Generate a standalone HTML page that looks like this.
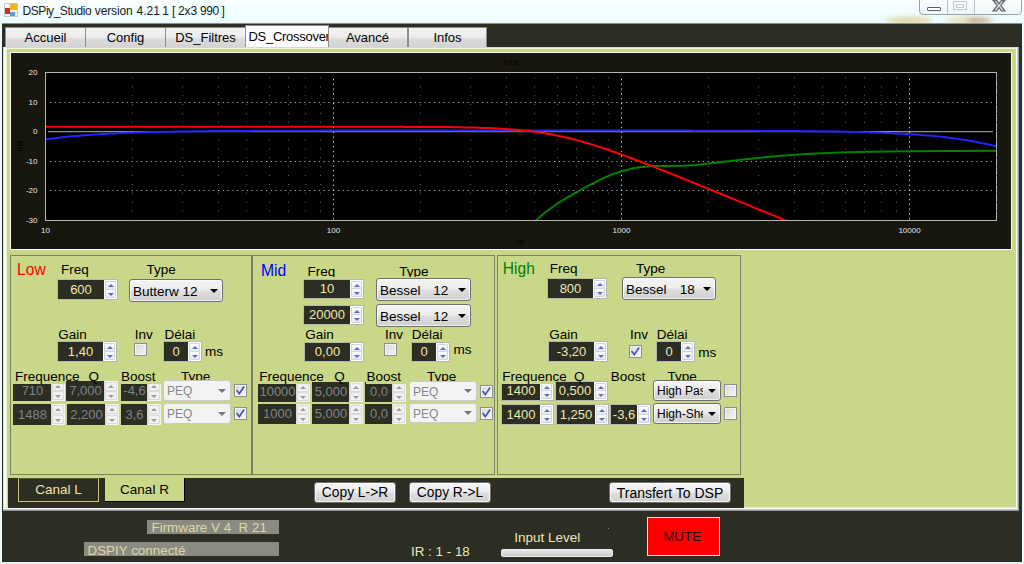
<!DOCTYPE html>
<html lang="fr"><head><meta charset="utf-8"><title>DSPiy_Studio</title>
<style>
html,body{margin:0;padding:0;}
body{width:1024px;height:564px;overflow:hidden;position:relative;background:#ecfbfd;
 font-family:"Liberation Sans",Arial,sans-serif;font-size:13px;color:#000;}
div,svg.chart,i,b{position:absolute;box-sizing:border-box;}
.t{white-space:nowrap;}
.tab{top:27px;height:21px;border:1px solid #8c8e92;border-bottom:none;text-align:center;font-size:13px;line-height:20px;
 background:linear-gradient(#f3f3f3 0%,#ececec 45%,#dcdcdc 55%,#d2d2d2 100%);color:#000;white-space:nowrap;overflow:hidden;}
.tab.sel{top:25px;height:23px;background:#fff;line-height:21px;border-color:#8c8e92;}
.pn{border:1px solid #7c8165;background:#c9d789;}
.nud{border:1px solid #b4b6b0;background:#fff;}
.nud .nv{left:0;top:0;background:#2d2e23;color:#f1e7b0;text-align:center;font-size:13px;white-space:nowrap;overflow:hidden;}
.nud .sp{right:0;top:0;background:#fff;}
.nud .sp i{left:1px;right:1px;height:9px;border:1px solid #d2d4dc;border-radius:1px;background:linear-gradient(#fdfdfd,#e6e8ee);}
.nud .sp i.u{top:1px;}
.nud .sp i.d{bottom:1px;}
.nud .sp i:after{content:"";position:absolute;left:50%;top:50%;margin-left:-3px;width:0;height:0;border-left:3px solid transparent;border-right:3px solid transparent;}
.nud .sp i.u:after{margin-top:-2px;border-bottom:3px solid #5d6cc6;}
.nud .sp i.d:after{margin-top:-1px;border-top:3px solid #5d6cc6;}
.nud.dis{border:none;background:none;}
.nud.dis .nv{color:#7e848c;}
.nud.dis .sp{background:#ececec;border:1px solid #f4f4f4;border-left-color:#dcdcdc;}
.nud.dis .sp i{border-color:#dadada;background:#f1f1f1;left:0;right:0;}
.nud.dis .sp i.u{top:0;}
.nud.dis .sp i.d{bottom:0;}
.nud.dis .sp i.u:after{border-bottom-color:#9a9a9a;}
.nud.dis .sp i.d:after{border-top-color:#9a9a9a;}
.cb{border:1px solid #707070;border-radius:3px;background:linear-gradient(#f4f4f4 0%,#ececec 48%,#dedede 52%,#d0d0d0 100%);
 font-size:13.5px;white-space:nowrap;overflow:hidden;color:#000;box-shadow:inset 0 0 0 1px rgba(255,255,255,.7);}
.cb span{position:absolute;top:0;overflow:hidden;white-space:nowrap;}
.cb b{right:4px;top:50%;margin-top:-2px;width:0;height:0;border-left:4px solid transparent;border-right:4px solid transparent;border-top:4px solid #000;}
.cb.dis{border-color:#c9cbc6;background:#f3f3f3;color:#83878c;box-shadow:none;}
.cb.dis b{border-top-color:#777;}
.ck{border:1px solid #8e8f8f;background:linear-gradient(135deg,#d8d8d8,#f6f6f6);box-shadow:inset 0 0 0 1px #f4f4f4;}
.btn{border:1px solid #707070;border-radius:3px;background:linear-gradient(#f4f4f4 0%,#ececec 48%,#dedede 52%,#d0d0d0 100%);
 text-align:center;font-size:13.5px;white-space:nowrap;color:#000;box-shadow:inset 0 0 0 1px rgba(255,255,255,.7);}
svg text{font-family:"Liberation Sans",Arial,sans-serif;}
</style></head><body>

<div style="left:0px;top:0px;width:1024px;height:24px;background:linear-gradient(#fbffff 0%,#f1fdfe 45%,#ebfcfd 100%);"></div>
<svg style="position:absolute;left:4px;top:3px" width="14" height="14" viewBox="0 0 14 14"><rect x="0.5" y="0.5" width="13" height="13" fill="#f4f4f4" stroke="#c9c9c9"/><rect x="1" y="5" width="5" height="6" fill="#c8302a"/><rect x="6" y="1" width="7" height="6" fill="#f0b429"/><rect x="6" y="9" width="5" height="4" fill="#5b9be0"/><rect x="1" y="1" width="3" height="3" fill="#fff"/></svg>
<div class="t" style="left:0;top:0;width:300px;height:22px;">
<div class="t" style="left:22.6px;top:3.94px;font-size:12px;line-height:14px;color:#1a1a1a;letter-spacing:-0.46px;">DSPiy_Studio</div>
<div class="t" style="left:94.8px;top:3.94px;font-size:12px;line-height:14px;color:#1a1a1a;letter-spacing:-0.14px;">version</div>
<div class="t" style="left:136.6px;top:3.94px;font-size:12px;line-height:14px;color:#1a1a1a;letter-spacing:-0.03px;">4.21</div>
<div class="t" style="left:162.2px;top:3.94px;font-size:12px;line-height:14px;color:#1a1a1a;letter-spacing:0px;">1</div>
<div class="t" style="left:172px;top:3.94px;font-size:12px;line-height:14px;color:#1a1a1a;letter-spacing:0px;">[</div>
<div class="t" style="left:178px;top:3.94px;font-size:12px;line-height:14px;color:#1a1a1a;letter-spacing:-0.1px;">2x3</div>
<div class="t" style="left:200px;top:3.94px;font-size:12px;line-height:14px;color:#1a1a1a;letter-spacing:-0.4px;">990</div>
<div class="t" style="left:221.6px;top:3.94px;font-size:12px;line-height:14px;color:#1a1a1a;letter-spacing:0px;">]</div>
</div>
<div style="left:886px;top:17px;width:46px;height:7px;background:#dcd28f;filter:blur(2.5px);opacity:.85;border-radius:50%;"></div>
<div style="left:946px;top:17px;width:46px;height:7px;background:linear-gradient(90deg,#e6e2b0 0%,#e0d8a6 40%,#bfa482 60%,#c0a684 100%);filter:blur(2.5px);opacity:.9;border-radius:50%;"></div>
<div style="left:919px;top:-4px;width:103px;height:19px;border:1px solid #9aa3a8;border-radius:4px;background:linear-gradient(#fdfefe,#eef6f8);"></div>
<div style="left:947px;top:0px;width:1px;height:14px;background:#b9c0c4;"></div>
<div style="left:974px;top:0px;width:1px;height:14px;background:#b9c0c4;"></div>
<div style="left:927px;top:7px;width:14px;height:4px;border:1px solid #5a5f66;border-radius:1px;background:#fff;"></div>
<div style="left:953px;top:1px;width:14px;height:9px;border:1px solid #c4c8cc;background:#f6f8f9;"></div>
<div style="left:956px;top:4px;width:8px;height:4px;border:1px solid #c4c8cc;"></div>
<svg style="position:absolute;left:992px;top:0px" width="14" height="12" viewBox="0 0 14 12"><path d="M1.2 0.5 L4.6 0.5 L7 3.6 L9.4 0.5 L12.8 0.5 L8.8 5.6 L12.8 10.8 L9.4 10.8 L7 7.6 L4.6 10.8 L1.2 10.8 L5.2 5.6 Z" fill="#dadade" stroke="#666a74" stroke-width="1.3"/></svg>
<div style="left:2px;top:24px;width:1020px;height:538px;background:#2d2e23;"></div>
<div style="left:2px;top:23px;width:1020px;height:1px;background:#8e9088;"></div>
<div style="left:0px;top:562px;width:1024px;height:2px;background:#e4f1f6;"></div>
<div class="tab" style="left:5px;width:81px;">Accueil</div>
<div class="tab" style="left:85px;width:81px;">Config</div>
<div class="tab" style="left:165px;width:81px;">DS_Filtres</div>
<div class="tab" style="left:327px;width:81px;">Avancé</div>
<div class="tab" style="left:408px;width:79px;">Infos</div>
<div class="tab sel" style="left:245px;width:84px;text-align:left;padding-left:2.5px;letter-spacing:-0.28px;">DS_Crossover</div>
<div style="left:3px;top:47px;width:1016px;height:464px;background:#c9d789;"></div>
<div style="left:3px;top:47px;width:1016px;height:1px;background:#d6d6d8;"></div>
<div style="left:4px;top:48px;width:1014px;height:1px;background:#f1f5de;"></div>
<div style="left:3px;top:47px;width:1px;height:464px;background:#d4d4d4;"></div>
<div style="left:4px;top:47px;width:2px;height:464px;background:#fff;"></div>
<div style="left:6px;top:49px;width:1px;height:459px;background:#e6edc6;"></div>
<div style="left:1016px;top:49px;width:1px;height:460px;background:#fff;"></div>
<div style="left:1017px;top:48px;width:1px;height:462px;background:#c8c8cc;"></div>
<div style="left:1018px;top:47px;width:1px;height:464px;background:#98989f;"></div>
<div style="left:3px;top:507px;width:1014px;height:1px;background:#e6edc6;"></div>
<div style="left:3px;top:508px;width:1015px;height:1px;background:#fff;"></div>
<div style="left:3px;top:509px;width:1015px;height:1px;background:#c6c6ca;"></div>
<div style="left:3px;top:510px;width:1016px;height:1px;background:#93939b;"></div>
<div style="left:10px;top:52px;width:1002px;height:198px;background:#fff;"></div>
<svg class="chart" style="left:11px;top:53px" width="1000" height="196" viewBox="11 53 1000 196"><rect x="11" y="53" width="1000" height="196" fill="#17170f"/><rect x="45.5" y="72.5" width="951.0" height="148.0" fill="#000" stroke="#b4b4b4" stroke-width="1"/><line x1="50" x2="995.5" y1="102.5" y2="102.5" stroke="#b2b2b2" stroke-width="1" stroke-dasharray="1.2 3.6"/><line x1="50" x2="995.5" y1="161.5" y2="161.5" stroke="#b2b2b2" stroke-width="1" stroke-dasharray="1.2 3.6"/><line x1="50" x2="995.5" y1="190.5" y2="190.5" stroke="#b2b2b2" stroke-width="1" stroke-dasharray="1.2 3.6"/><line x1="132.5" x2="132.5" y1="77.5" y2="219.5" stroke="#6c6c6c" stroke-width="1" stroke-dasharray="1 7.87"/><line x1="182.5" x2="182.5" y1="77.5" y2="219.5" stroke="#6c6c6c" stroke-width="1" stroke-dasharray="1 7.87"/><line x1="218.5" x2="218.5" y1="77.5" y2="219.5" stroke="#6c6c6c" stroke-width="1" stroke-dasharray="1 7.87"/><line x1="246.5" x2="246.5" y1="77.5" y2="219.5" stroke="#6c6c6c" stroke-width="1" stroke-dasharray="1 7.87"/><line x1="269.5" x2="269.5" y1="77.5" y2="219.5" stroke="#6c6c6c" stroke-width="1" stroke-dasharray="1 7.87"/><line x1="288.5" x2="288.5" y1="77.5" y2="219.5" stroke="#6c6c6c" stroke-width="1" stroke-dasharray="1 7.87"/><line x1="305.5" x2="305.5" y1="77.5" y2="219.5" stroke="#6c6c6c" stroke-width="1" stroke-dasharray="1 7.87"/><line x1="320.5" x2="320.5" y1="77.5" y2="219.5" stroke="#6c6c6c" stroke-width="1" stroke-dasharray="1 7.87"/><line x1="333.5" x2="333.5" y1="79" y2="219.5" stroke="#dcdcdc" stroke-width="1" stroke-dasharray="1.2 3.6"/><line x1="420.5" x2="420.5" y1="77.5" y2="219.5" stroke="#6c6c6c" stroke-width="1" stroke-dasharray="1 7.87"/><line x1="470.5" x2="470.5" y1="77.5" y2="219.5" stroke="#6c6c6c" stroke-width="1" stroke-dasharray="1 7.87"/><line x1="506.5" x2="506.5" y1="77.5" y2="219.5" stroke="#6c6c6c" stroke-width="1" stroke-dasharray="1 7.87"/><line x1="534.5" x2="534.5" y1="77.5" y2="219.5" stroke="#6c6c6c" stroke-width="1" stroke-dasharray="1 7.87"/><line x1="557.5" x2="557.5" y1="77.5" y2="219.5" stroke="#6c6c6c" stroke-width="1" stroke-dasharray="1 7.87"/><line x1="576.5" x2="576.5" y1="77.5" y2="219.5" stroke="#6c6c6c" stroke-width="1" stroke-dasharray="1 7.87"/><line x1="593.5" x2="593.5" y1="77.5" y2="219.5" stroke="#6c6c6c" stroke-width="1" stroke-dasharray="1 7.87"/><line x1="608.5" x2="608.5" y1="77.5" y2="219.5" stroke="#6c6c6c" stroke-width="1" stroke-dasharray="1 7.87"/><line x1="621.5" x2="621.5" y1="79" y2="219.5" stroke="#dcdcdc" stroke-width="1" stroke-dasharray="1.2 3.6"/><line x1="708.5" x2="708.5" y1="77.5" y2="219.5" stroke="#6c6c6c" stroke-width="1" stroke-dasharray="1 7.87"/><line x1="758.5" x2="758.5" y1="77.5" y2="219.5" stroke="#6c6c6c" stroke-width="1" stroke-dasharray="1 7.87"/><line x1="794.5" x2="794.5" y1="77.5" y2="219.5" stroke="#6c6c6c" stroke-width="1" stroke-dasharray="1 7.87"/><line x1="822.5" x2="822.5" y1="77.5" y2="219.5" stroke="#6c6c6c" stroke-width="1" stroke-dasharray="1 7.87"/><line x1="845.5" x2="845.5" y1="77.5" y2="219.5" stroke="#6c6c6c" stroke-width="1" stroke-dasharray="1 7.87"/><line x1="864.5" x2="864.5" y1="77.5" y2="219.5" stroke="#6c6c6c" stroke-width="1" stroke-dasharray="1 7.87"/><line x1="881.5" x2="881.5" y1="77.5" y2="219.5" stroke="#6c6c6c" stroke-width="1" stroke-dasharray="1 7.87"/><line x1="896.5" x2="896.5" y1="77.5" y2="219.5" stroke="#6c6c6c" stroke-width="1" stroke-dasharray="1 7.87"/><line x1="909.5" x2="909.5" y1="79" y2="219.5" stroke="#dcdcdc" stroke-width="1" stroke-dasharray="1.2 3.6"/><line x1="996.5" x2="996.5" y1="77.5" y2="219.5" stroke="#6c6c6c" stroke-width="1" stroke-dasharray="1 7.87"/><line x1="48" x2="993" y1="131.7" y2="131.7" stroke="#b6b6b2" stroke-width="1"/><clipPath id="pc"><rect x="46.0" y="73.0" width="950.0" height="147.0"/></clipPath><polyline points="535.3,221.0 545.0,212.5 556.0,204.5 566.0,198.2 576.8,192.2 590.0,184.8 604.4,177.6 614.0,173.8 621.7,171.2 632.0,168.6 641.3,167.0 652.8,166.0 665.0,165.9 683.8,165.8 696.0,164.9 709.0,163.4 724.0,161.7 739.0,160.0 758.0,158.0 778.0,156.1 792.0,155.0 806.0,154.1 823.0,153.3 840.0,152.6 870.0,151.8 909.5,151.2 950.0,150.9 996.0,150.8" fill="none" stroke="#008200" stroke-width="2" stroke-linejoin="round" clip-path="url(#pc)"/><polyline points="45.5,139.5 47.9,139.1 50.3,138.8 52.7,138.5 55.1,138.2 57.5,137.9 59.9,137.6 62.3,137.3 64.7,137.1 67.1,136.8 69.5,136.6 71.9,136.3 74.3,136.1 76.7,135.9 79.1,135.7 81.5,135.5 83.9,135.3 86.3,135.1 88.7,134.9 91.1,134.8 93.5,134.6 95.9,134.4 98.3,134.3 100.7,134.1 103.1,134.0 105.5,133.9 107.9,133.7 110.3,133.6 112.7,133.5 115.1,133.4 117.5,133.2 119.9,133.1 122.3,133.0 124.7,132.9 127.1,132.8 129.5,132.8 131.9,132.7 134.3,132.6 136.7,132.5 139.1,132.4 141.5,132.4 143.9,132.3 146.3,132.2 148.7,132.2 151.1,132.1 153.5,132.0 155.9,132.0 158.3,131.9 160.7,131.9 163.1,131.8 165.5,131.8 167.9,131.7 170.3,131.7 172.7,131.6 175.1,131.6 177.5,131.5 179.9,131.5 182.3,131.5 184.7,131.4 187.1,131.4 189.5,131.4 191.9,131.3 194.3,131.3 196.7,131.3 199.1,131.2 201.5,131.2 203.9,131.2 206.3,131.2 208.7,131.1 211.1,131.1 213.5,131.1 215.9,131.1 218.3,131.1 220.7,131.0 223.1,131.0 225.5,131.0 227.9,131.0 230.3,131.0 232.7,131.0 235.1,130.9 237.5,130.9 239.9,130.9 242.3,130.9 244.7,130.9 247.1,130.9 249.5,130.9 251.9,130.8 254.3,130.8 256.7,130.8 259.1,130.8 261.5,130.8 263.9,130.8 266.3,130.8 268.7,130.8 271.1,130.8 273.5,130.8 275.9,130.8 278.3,130.7 280.7,130.7 283.1,130.7 285.5,130.7 287.9,130.7 290.3,130.7 292.7,130.7 295.1,130.7 297.5,130.7 299.9,130.7 302.3,130.7 304.7,130.7 307.1,130.7 309.5,130.7 311.9,130.7 314.3,130.7 316.7,130.7 319.1,130.7 321.5,130.6 323.9,130.6 326.3,130.6 328.7,130.6 331.1,130.6 333.5,130.6 335.9,130.6 338.3,130.6 340.7,130.6 343.1,130.6 345.5,130.6 347.9,130.6 350.3,130.6 352.7,130.6 355.1,130.6 357.5,130.6 359.9,130.6 362.3,130.6 364.7,130.6 367.1,130.6 369.5,130.6 371.9,130.6 374.3,130.6 376.7,130.6 379.1,130.6 381.5,130.6 383.9,130.6 386.3,130.6 388.7,130.6 391.1,130.6 393.5,130.6 395.9,130.6 398.3,130.6 400.7,130.6 403.1,130.6 405.5,130.6 407.9,130.6 410.3,130.6 412.7,130.6 415.1,130.6 417.5,130.6 419.9,130.6 422.3,130.6 424.7,130.6 427.1,130.6 429.5,130.6 431.9,130.6 434.3,130.6 436.7,130.6 439.1,130.6 441.5,130.6 443.9,130.6 446.3,130.6 448.7,130.6 451.1,130.6 453.5,130.6 455.9,130.6 458.3,130.6 460.7,130.6 463.1,130.6 465.5,130.6 467.9,130.6 470.3,130.6 472.7,130.6 475.1,130.6 477.5,130.6 479.9,130.6 482.3,130.6 484.7,130.6 487.1,130.6 489.5,130.6 491.9,130.6 494.3,130.6 496.7,130.6 499.1,130.6 501.5,130.6 503.9,130.6 506.3,130.6 508.7,130.6 511.1,130.6 513.5,130.6 515.9,130.6 518.3,130.6 520.7,130.6 523.1,130.6 525.5,130.6 527.9,130.6 530.3,130.6 532.7,130.6 535.1,130.6 537.5,130.6 539.9,130.6 542.3,130.6 544.7,130.6 547.1,130.6 549.5,130.6 551.9,130.6 554.3,130.6 556.7,130.6 559.1,130.6 561.5,130.6 563.9,130.6 566.3,130.6 568.7,130.6 571.1,130.6 573.5,130.6 575.9,130.6 578.3,130.6 580.7,130.6 583.1,130.6 585.5,130.6 587.9,130.6 590.3,130.6 592.7,130.6 595.1,130.6 597.5,130.6 599.9,130.6 602.3,130.6 604.7,130.6 607.1,130.6 609.5,130.6 611.9,130.6 614.3,130.6 616.7,130.6 619.1,130.6 621.5,130.6 623.9,130.6 626.3,130.6 628.7,130.6 631.1,130.6 633.5,130.6 635.9,130.6 638.3,130.6 640.7,130.6 643.1,130.6 645.5,130.6 647.9,130.6 650.3,130.6 652.7,130.6 655.1,130.6 657.5,130.6 659.9,130.6 662.3,130.6 664.7,130.6 667.1,130.6 669.5,130.6 671.9,130.6 674.3,130.6 676.7,130.6 679.1,130.6 681.5,130.6 683.9,130.6 686.3,130.6 688.7,130.6 691.1,130.6 693.5,130.7 695.9,130.7 698.3,130.7 700.7,130.7 703.1,130.7 705.5,130.7 707.9,130.7 710.3,130.7 712.7,130.7 715.1,130.7 717.5,130.7 719.9,130.7 722.3,130.7 724.7,130.7 727.1,130.7 729.5,130.7 731.9,130.7 734.3,130.7 736.7,130.8 739.1,130.8 741.5,130.8 743.9,130.8 746.3,130.8 748.7,130.8 751.1,130.8 753.5,130.8 755.9,130.8 758.3,130.8 760.7,130.9 763.1,130.9 765.5,130.9 767.9,130.9 770.3,130.9 772.7,130.9 775.1,130.9 777.5,130.9 779.9,131.0 782.3,131.0 784.7,131.0 787.1,131.0 789.5,131.0 791.9,131.1 794.3,131.1 796.7,131.1 799.1,131.1 801.5,131.1 803.9,131.2 806.3,131.2 808.7,131.2 811.1,131.2 813.5,131.3 815.9,131.3 818.3,131.3 820.7,131.4 823.1,131.4 825.5,131.4 827.9,131.5 830.3,131.5 832.7,131.5 835.1,131.6 837.5,131.6 839.9,131.7 842.3,131.7 844.7,131.7 847.1,131.8 849.5,131.8 851.9,131.9 854.3,132.0 856.7,132.0 859.1,132.1 861.5,132.1 863.9,132.2 866.3,132.3 868.7,132.3 871.1,132.4 873.5,132.5 875.9,132.6 878.3,132.7 880.7,132.7 883.1,132.8 885.5,132.9 887.9,133.0 890.3,133.1 892.7,133.3 895.1,133.4 897.5,133.5 899.9,133.6 902.3,133.7 904.7,133.9 907.1,134.0 909.5,134.2 911.9,134.3 914.3,134.5 916.7,134.6 919.1,134.8 921.5,135.0 923.9,135.2 926.3,135.4 928.7,135.6 931.1,135.8 933.5,136.0 935.9,136.3 938.3,136.5 940.7,136.7 943.1,137.0 945.5,137.3 947.9,137.6 950.3,137.9 952.7,138.2 955.1,138.5 957.5,138.8 959.9,139.2 962.3,139.5 964.7,139.9 967.1,140.3 969.5,140.7 971.9,141.1 974.3,141.5 976.7,142.0 979.1,142.5 981.5,142.9 983.9,143.4 986.3,143.9 988.7,144.5 991.1,145.0 993.5,145.6 995.9,146.2 998.3,146.8" fill="none" stroke="#2424ff" stroke-width="2" stroke-linejoin="round" clip-path="url(#pc)"/><polyline points="45.5,126.8 47.9,126.8 50.3,126.8 52.7,126.8 55.1,126.8 57.5,126.8 59.9,126.8 62.3,126.8 64.7,126.8 67.1,126.8 69.5,126.8 71.9,126.8 74.3,126.8 76.7,126.8 79.1,126.8 81.5,126.8 83.9,126.8 86.3,126.8 88.7,126.8 91.1,126.8 93.5,126.8 95.9,126.8 98.3,126.8 100.7,126.8 103.1,126.8 105.5,126.8 107.9,126.8 110.3,126.8 112.7,126.8 115.1,126.8 117.5,126.8 119.9,126.8 122.3,126.8 124.7,126.8 127.1,126.8 129.5,126.8 131.9,126.8 134.3,126.8 136.7,126.8 139.1,126.8 141.5,126.8 143.9,126.8 146.3,126.8 148.7,126.8 151.1,126.8 153.5,126.8 155.9,126.8 158.3,126.8 160.7,126.8 163.1,126.8 165.5,126.8 167.9,126.8 170.3,126.8 172.7,126.8 175.1,126.8 177.5,126.8 179.9,126.8 182.3,126.8 184.7,126.8 187.1,126.8 189.5,126.8 191.9,126.8 194.3,126.8 196.7,126.8 199.1,126.8 201.5,126.8 203.9,126.8 206.3,126.8 208.7,126.8 211.1,126.8 213.5,126.8 215.9,126.8 218.3,126.8 220.7,126.8 223.1,126.8 225.5,126.8 227.9,126.8 230.3,126.8 232.7,126.8 235.1,126.8 237.5,126.8 239.9,126.8 242.3,126.8 244.7,126.8 247.1,126.8 249.5,126.8 251.9,126.8 254.3,126.8 256.7,126.8 259.1,126.8 261.5,126.8 263.9,126.8 266.3,126.8 268.7,126.8 271.1,126.8 273.5,126.8 275.9,126.8 278.3,126.8 280.7,126.8 283.1,126.8 285.5,126.8 287.9,126.8 290.3,126.8 292.7,126.8 295.1,126.8 297.5,126.8 299.9,126.8 302.3,126.8 304.7,126.8 307.1,126.8 309.5,126.8 311.9,126.8 314.3,126.8 316.7,126.8 319.1,126.8 321.5,126.8 323.9,126.8 326.3,126.8 328.7,126.8 331.1,126.8 333.5,126.8 335.9,126.8 338.3,126.8 340.7,126.8 343.1,126.8 345.5,126.8 347.9,126.8 350.3,126.8 352.7,126.8 355.1,126.8 357.5,126.8 359.9,126.8 362.3,126.8 364.7,126.8 367.1,126.8 369.5,126.8 371.9,126.8 374.3,126.8 376.7,126.8 379.1,126.8 381.5,126.8 383.9,126.8 386.3,126.8 388.7,126.8 391.1,126.8 393.5,126.8 395.9,126.8 398.3,126.8 400.7,126.8 403.1,126.8 405.5,126.9 407.9,126.9 410.3,126.9 412.7,126.9 415.1,126.9 417.5,126.9 419.9,126.9 422.3,126.9 424.7,126.9 427.1,127.0 429.5,127.0 431.9,127.0 434.3,127.0 436.7,127.0 439.1,127.0 441.5,127.1 443.9,127.1 446.3,127.1 448.7,127.1 451.1,127.2 453.5,127.2 455.9,127.2 458.3,127.3 460.7,127.3 463.1,127.4 465.5,127.4 467.9,127.5 470.3,127.5 472.7,127.6 475.1,127.6 477.5,127.7 479.9,127.8 482.3,127.9 484.7,127.9 487.1,128.0 489.5,128.1 491.9,128.2 494.3,128.4 496.7,128.5 499.1,128.6 501.5,128.7 503.9,128.9 506.3,129.0 508.7,129.2 511.1,129.4 513.5,129.6 515.9,129.8 518.3,130.0 520.7,130.2 523.1,130.4 525.5,130.7 527.9,131.0 530.3,131.2 532.7,131.5 535.1,131.9 537.5,132.2 539.9,132.5 542.3,132.9 544.7,133.3 547.1,133.7 549.5,134.1 551.9,134.5 554.3,135.0 556.7,135.5 559.1,136.0 561.5,136.5 563.9,137.0 566.3,137.6 568.7,138.1 571.1,138.7 573.5,139.3 575.9,140.0 578.3,140.6 580.7,141.3 583.1,141.9 585.5,142.6 587.9,143.3 590.3,144.1 592.7,144.8 595.1,145.6 597.5,146.3 599.9,147.1 602.3,147.9 604.7,148.7 607.1,149.5 609.5,150.3 611.9,151.2 614.3,152.0 616.7,152.9 619.1,153.7 621.5,154.6 623.9,155.5 626.3,156.4 628.7,157.2 631.1,158.1 633.5,159.0 635.9,160.0 638.3,160.9 640.7,161.8 643.1,162.7 645.5,163.6 647.9,164.6 650.3,165.5 652.7,166.4 655.1,167.4 657.5,168.3 659.9,169.3 662.3,170.2 664.7,171.2 667.1,172.2 669.5,173.1 671.9,174.1 674.3,175.0 676.7,176.0 679.1,177.0 681.5,177.9 683.9,178.9 686.3,179.9 688.7,180.8 691.1,181.8 693.5,182.8 695.9,183.8 698.3,184.7 700.7,185.7 703.1,186.7 705.5,187.7 707.9,188.6 710.3,189.6 712.7,190.6 715.1,191.6 717.5,192.6 719.9,193.5 722.3,194.5 724.7,195.5 727.1,196.5 729.5,197.5 731.9,198.5 734.3,199.4 736.7,200.4 739.1,201.4 741.5,202.4 743.9,203.4 746.3,204.4 748.7,205.3 751.1,206.3 753.5,207.3 755.9,208.3 758.3,209.3 760.7,210.3 763.1,211.3 765.5,212.2 767.9,213.2 770.3,214.2 772.7,215.2 775.1,216.2 777.5,217.2 779.9,218.2 782.3,219.1 784.7,220.1 787.1,221.1 789.5,222.1 791.9,223.1 794.3,224.1 796.7,225.1 799.1,226.0 801.5,227.0 803.9,228.0 806.3,229.0 808.7,230.0 811.1,231.0 813.5,232.0 815.9,232.9 818.3,233.9 820.7,234.9 823.1,235.9 825.5,236.9 827.9,237.9 830.3,238.9 832.7,239.9 835.1,240.8 837.5,241.8 839.9,242.8 842.3,243.8 844.7,244.8 847.1,245.8 849.5,246.8 851.9,247.7 854.3,248.7 856.7,249.7 859.1,250.7 861.5,251.7 863.9,252.7 866.3,253.7 868.7,254.7 871.1,255.6 873.5,256.6 875.9,257.6 878.3,258.6 880.7,259.6 883.1,260.6 885.5,261.6 887.9,262.5 890.3,263.5 892.7,264.5 895.1,265.5 897.5,266.5 899.9,267.5 902.3,268.5 904.7,269.4 907.1,270.4 909.5,271.4 911.9,272.4 914.3,273.4 916.7,274.4 919.1,275.4 921.5,276.4 923.9,277.3 926.3,278.3 928.7,279.3 931.1,280.3 933.5,281.3 935.9,282.3 938.3,283.3 940.7,284.2 943.1,285.2 945.5,286.2 947.9,287.2 950.3,288.2 952.7,289.2 955.1,290.2 957.5,291.2 959.9,292.1 962.3,293.1 964.7,294.1 967.1,295.1 969.5,296.1 971.9,297.1 974.3,298.1 976.7,299.0 979.1,300.0 981.5,301.0 983.9,302.0 986.3,303.0 988.7,304.0 991.1,305.0 993.5,306.0 995.9,306.9 998.3,307.9" fill="none" stroke="#ff0000" stroke-width="2" stroke-linejoin="round" clip-path="url(#pc)"/><text x="37.5" y="75.4" text-anchor="end" fill="#e8e8e8" font-size="8" >20</text><text x="37.5" y="105.4" text-anchor="end" fill="#e8e8e8" font-size="8" >10</text><text x="37.5" y="134.4" text-anchor="end" fill="#e8e8e8" font-size="8" >0</text><text x="37.5" y="164.4" text-anchor="end" fill="#e8e8e8" font-size="8" >-10</text><text x="37.5" y="193.4" text-anchor="end" fill="#e8e8e8" font-size="8" >-20</text><text x="37.5" y="223.4" text-anchor="end" fill="#e8e8e8" font-size="8" >-30</text><text x="45.5" y="233" text-anchor="middle" fill="#e8e8e8" font-size="8" >10</text><text x="333.5" y="233" text-anchor="middle" fill="#e8e8e8" font-size="8" >100</text><text x="621.5" y="233" text-anchor="middle" fill="#e8e8e8" font-size="8" >1000</text><text x="909.5" y="233" text-anchor="middle" fill="#e8e8e8" font-size="8" >10000</text><text x="511" y="64.8" text-anchor="middle" fill="#060604" font-size="8" font-weight="bold">Title</text><text x="520.5" y="243.5" text-anchor="middle" fill="#060604" font-size="7" font-weight="bold">Hz</text><text transform="translate(22.5,146) rotate(-90)" text-anchor="middle" fill="#060604" font-size="8.5" font-weight="bold">dB</text></svg>
<div style="left:8px;top:478px;width:736px;height:30px;background:#2d2e23;"></div>
<div class="pn" style="left:10px;top:255px;width:242px;height:220px;"></div>
<div class="pn" style="left:252px;top:255px;width:243px;height:220px;"></div>
<div class="pn" style="left:497px;top:255px;width:244px;height:220px;"></div>
<div class="t" style="left:17px;top:260.81px;font-size:15.7px;line-height:17.7px;color:#ff0000;">Low</div>
<div class="t" style="left:61px;top:262.17px;font-size:13.5px;line-height:15.5px;color:#000;">Freq</div>
<div class="t" style="left:146.5px;top:262.17px;font-size:13.5px;line-height:15.5px;color:#000;">Type</div>
<div class="nud" style="left:57px;top:279px;width:61px;height:21px;"><div class="nv" style="width:46px;height:19px;line-height:19.4px;">600</div><div class="sp" style="width:13px;height:19px;"><i class="u"></i><i class="d"></i></div></div>
<div class="cb" style="left:129px;top:279px;width:94px;height:23px;"><span style="left:3px;width:72px;height:21px;line-height:23.4px;font-size:13.5px;">Butterw 12</span><b></b></div>
<div class="t" style="left:58.3px;top:326.97px;font-size:13.5px;line-height:15.5px;color:#000;">Gain</div>
<div class="nud" style="left:57px;top:341px;width:60px;height:21px;"><div class="nv" style="width:45px;height:19px;line-height:19.4px;">1,40</div><div class="sp" style="width:13px;height:19px;"><i class="u"></i><i class="d"></i></div></div>
<div class="t" style="left:134.8px;top:326.97px;font-size:13.5px;line-height:15.5px;color:#000;">Inv</div>
<div class="ck" style="left:134px;top:343px;width:13px;height:13px;"></div>
<div class="t" style="left:164.5px;top:326.97px;font-size:13.5px;line-height:15.5px;color:#000;">Délai</div>
<div class="nud" style="left:163px;top:341px;width:39px;height:21px;"><div class="nv" style="width:24px;height:19px;line-height:19.4px;">0</div><div class="sp" style="width:13px;height:19px;"><i class="u"></i><i class="d"></i></div></div>
<div class="t" style="left:205px;top:343.67px;font-size:13.5px;line-height:15.5px;color:#000;">ms</div>
<div class="nud dis" style="left:13px;top:381px;width:52px;height:20px;"><div class="nv" style="width:38px;height:20px;line-height:20.4px;padding-left:1px;">710</div><div class="sp" style="width:14px;height:20px;"><i class="u"></i><i class="d"></i></div></div>
<div class="nud dis" style="left:66px;top:381px;width:52px;height:20px;"><div class="nv" style="width:38px;height:20px;line-height:20.4px;padding-left:1px;">7,000</div><div class="sp" style="width:14px;height:20px;"><i class="u"></i><i class="d"></i></div></div>
<div class="nud dis" style="left:121px;top:381px;width:40px;height:20px;"><div class="nv" style="width:26px;height:20px;line-height:20.4px;padding-left:1px;">-4,6</div><div class="sp" style="width:14px;height:20px;"><i class="u"></i><i class="d"></i></div></div>
<div class="cb dis" style="left:163px;top:380px;width:68px;height:21px;"><span style="left:3px;width:46px;height:19px;line-height:21.4px;font-size:12px;">PEQ</span><b></b></div>
<div class="ck" style="left:234px;top:384px;width:13px;height:13px;"><svg width="13" height="13" viewBox="0 0 13 13" style="position:absolute;left:0;top:0"><path d="M1.5 5.0 L4.3 8.6 L9.1 1.5" fill="none" stroke="#3f52b4" stroke-width="1.6" stroke-linecap="butt" stroke-linejoin="miter"/></svg></div>
<div class="nud dis" style="left:13px;top:404px;width:52px;height:21px;"><div class="nv" style="width:38px;height:21px;line-height:21.4px;padding-left:1px;">1488</div><div class="sp" style="width:14px;height:21px;"><i class="u"></i><i class="d"></i></div></div>
<div class="nud dis" style="left:67px;top:404px;width:52px;height:21px;"><div class="nv" style="width:38px;height:21px;line-height:21.4px;padding-left:1px;">2,200</div><div class="sp" style="width:14px;height:21px;"><i class="u"></i><i class="d"></i></div></div>
<div class="nud dis" style="left:121px;top:404px;width:40px;height:21px;"><div class="nv" style="width:26px;height:21px;line-height:21.4px;padding-left:1px;">3,6</div><div class="sp" style="width:14px;height:21px;"><i class="u"></i><i class="d"></i></div></div>
<div class="cb dis" style="left:163px;top:403px;width:68px;height:21px;"><span style="left:3px;width:46px;height:19px;line-height:21.4px;font-size:12px;">PEQ</span><b></b></div>
<div class="ck" style="left:234px;top:407px;width:13px;height:13px;"><svg width="13" height="13" viewBox="0 0 13 13" style="position:absolute;left:0;top:0"><path d="M1.5 5.0 L4.3 8.6 L9.1 1.5" fill="none" stroke="#3f52b4" stroke-width="1.6" stroke-linecap="butt" stroke-linejoin="miter"/></svg></div>
<div class="t" style="left:12px;top:366px;width:54px;height:17.7px;background:#c9d789;"></div>
<div class="t" style="left:120px;top:366px;width:42px;height:17.7px;background:#c9d789;"></div>
<div class="t" style="left:15px;top:368.97px;font-size:13.5px;line-height:15.5px;color:#000;">Frequence</div>
<div class="t" style="left:88.5px;top:368.97px;font-size:13.5px;line-height:15.5px;color:#000;">Q</div>
<div class="t" style="left:121px;top:368.97px;font-size:13.5px;line-height:15.5px;color:#000;">Boost</div>
<div class="t" style="left:180px;top:368.97px;width:34px;height:11.03px;overflow:hidden;font-size:13.5px;line-height:15.5px;"><span style="position:absolute;left:1px;top:0">Type</span></div>
<div class="t" style="left:261px;top:262.11px;font-size:15.7px;line-height:17.7px;color:#0000ff;">Mid</div>
<div class="t" style="left:307.5px;top:263.77px;font-size:13.5px;line-height:15.5px;color:#000;height:13.63px;overflow:hidden;">Freq</div>
<div class="t" style="left:399.3px;top:263.77px;font-size:13.5px;line-height:15.5px;color:#000;height:13.63px;overflow:hidden;">Type</div>
<div class="nud" style="left:303px;top:279px;width:61px;height:20px;"><div class="nv" style="width:46px;height:18px;line-height:18.4px;">10</div><div class="sp" style="width:13px;height:18px;"><i class="u"></i><i class="d"></i></div></div>
<div class="cb" style="left:376px;top:278px;width:95px;height:23px;"><span style="left:3px;width:73px;height:21px;line-height:23.4px;font-size:13.5px;">Bessel&nbsp;&nbsp; <i style="position:static;margin-left:1.5px;font-style:normal">12</i></span><b></b></div>
<div class="nud" style="left:303px;top:305px;width:61px;height:20px;"><div class="nv" style="width:46px;height:18px;line-height:18.4px;">20000</div><div class="sp" style="width:13px;height:18px;"><i class="u"></i><i class="d"></i></div></div>
<div class="cb" style="left:376px;top:304px;width:95px;height:23px;"><span style="left:3px;width:73px;height:21px;line-height:23.4px;font-size:13.5px;">Bessel&nbsp;&nbsp; <i style="position:static;margin-left:1.5px;font-style:normal">12</i></span><b></b></div>
<div class="t" style="left:305.3px;top:326.67px;font-size:13.5px;line-height:15.5px;color:#000;">Gain</div>
<div class="nud" style="left:304px;top:342px;width:60px;height:20px;"><div class="nv" style="width:45px;height:18px;line-height:18.4px;">0,00</div><div class="sp" style="width:13px;height:18px;"><i class="u"></i><i class="d"></i></div></div>
<div class="t" style="left:385px;top:326.67px;font-size:13.5px;line-height:15.5px;color:#000;">Inv</div>
<div class="ck" style="left:384px;top:343px;width:13px;height:13px;"></div>
<div class="t" style="left:411.8px;top:326.67px;font-size:13.5px;line-height:15.5px;color:#000;">Délai</div>
<div class="nud" style="left:411px;top:342px;width:39px;height:20px;"><div class="nv" style="width:24px;height:18px;line-height:18.4px;">0</div><div class="sp" style="width:13px;height:18px;"><i class="u"></i><i class="d"></i></div></div>
<div class="t" style="left:453.5px;top:342.07px;font-size:13.5px;line-height:15.5px;color:#000;">ms</div>
<div class="nud dis" style="left:258px;top:382px;width:52px;height:20px;"><div class="nv" style="width:38px;height:20px;line-height:20.4px;padding-left:1px;">10000</div><div class="sp" style="width:14px;height:20px;"><i class="u"></i><i class="d"></i></div></div>
<div class="nud dis" style="left:312px;top:382px;width:51px;height:20px;"><div class="nv" style="width:37px;height:20px;line-height:20.4px;padding-left:1px;">5,000</div><div class="sp" style="width:14px;height:20px;"><i class="u"></i><i class="d"></i></div></div>
<div class="nud dis" style="left:365px;top:382px;width:41px;height:20px;"><div class="nv" style="width:27px;height:20px;line-height:20.4px;padding-left:1px;">0,0</div><div class="sp" style="width:14px;height:20px;"><i class="u"></i><i class="d"></i></div></div>
<div class="cb dis" style="left:409px;top:381px;width:68px;height:20px;"><span style="left:3px;width:46px;height:18px;line-height:20.4px;font-size:12px;">PEQ</span><b></b></div>
<div class="ck" style="left:480px;top:385px;width:13px;height:13px;"><svg width="13" height="13" viewBox="0 0 13 13" style="position:absolute;left:0;top:0"><path d="M1.5 5.0 L4.3 8.6 L9.1 1.5" fill="none" stroke="#3f52b4" stroke-width="1.6" stroke-linecap="butt" stroke-linejoin="miter"/></svg></div>
<div class="nud dis" style="left:258px;top:404px;width:52px;height:20px;"><div class="nv" style="width:38px;height:20px;line-height:20.4px;padding-left:1px;">1000</div><div class="sp" style="width:14px;height:20px;"><i class="u"></i><i class="d"></i></div></div>
<div class="nud dis" style="left:312px;top:404px;width:51px;height:20px;"><div class="nv" style="width:37px;height:20px;line-height:20.4px;padding-left:1px;">5,000</div><div class="sp" style="width:14px;height:20px;"><i class="u"></i><i class="d"></i></div></div>
<div class="nud dis" style="left:365px;top:404px;width:41px;height:20px;"><div class="nv" style="width:27px;height:20px;line-height:20.4px;padding-left:1px;">0,0</div><div class="sp" style="width:14px;height:20px;"><i class="u"></i><i class="d"></i></div></div>
<div class="cb dis" style="left:409px;top:403px;width:68px;height:20px;"><span style="left:3px;width:46px;height:18px;line-height:20.4px;font-size:12px;">PEQ</span><b></b></div>
<div class="ck" style="left:480px;top:407px;width:13px;height:13px;"><svg width="13" height="13" viewBox="0 0 13 13" style="position:absolute;left:0;top:0"><path d="M1.5 5.0 L4.3 8.6 L9.1 1.5" fill="none" stroke="#3f52b4" stroke-width="1.6" stroke-linecap="butt" stroke-linejoin="miter"/></svg></div>
<div class="t" style="left:257px;top:366px;width:54px;height:18.0px;background:#c9d789;"></div>
<div class="t" style="left:365.5px;top:366px;width:42px;height:18.0px;background:#c9d789;"></div>
<div class="t" style="left:259.3px;top:369.27px;font-size:13.5px;line-height:15.5px;color:#000;">Frequence</div>
<div class="t" style="left:334.3px;top:369.27px;font-size:13.5px;line-height:15.5px;color:#000;">Q</div>
<div class="t" style="left:366.5px;top:369.27px;font-size:13.5px;line-height:15.5px;color:#000;">Boost</div>
<div class="t" style="left:426px;top:369.27px;width:34px;height:11.73px;overflow:hidden;font-size:13.5px;line-height:15.5px;"><span style="position:absolute;left:1px;top:0">Type</span></div>
<div class="t" style="left:502.8px;top:259.99px;font-size:15.6px;line-height:17.6px;color:#008000;">High</div>
<div class="t" style="left:549.8px;top:260.97px;font-size:13.5px;line-height:15.5px;color:#000;">Freq</div>
<div class="t" style="left:636px;top:260.97px;font-size:13.5px;line-height:15.5px;color:#000;">Type</div>
<div class="nud" style="left:547px;top:278px;width:60px;height:21px;"><div class="nv" style="width:45px;height:19px;line-height:19.4px;">800</div><div class="sp" style="width:13px;height:19px;"><i class="u"></i><i class="d"></i></div></div>
<div class="cb" style="left:622px;top:277px;width:94px;height:23px;"><span style="left:3px;width:72px;height:21px;line-height:23.4px;font-size:13.5px;">Bessel&nbsp;&nbsp; <i style="position:static;margin-left:2px;font-style:normal">18</i></span><b></b></div>
<div class="t" style="left:549.3px;top:327.17px;font-size:13.5px;line-height:15.5px;color:#000;">Gain</div>
<div class="nud" style="left:548px;top:341px;width:60px;height:21px;"><div class="nv" style="width:45px;height:19px;line-height:19.4px;">-3,20</div><div class="sp" style="width:13px;height:19px;"><i class="u"></i><i class="d"></i></div></div>
<div class="t" style="left:630px;top:327.17px;font-size:13.5px;line-height:15.5px;color:#000;">Inv</div>
<div class="ck" style="left:629px;top:345px;width:13px;height:13px;"><svg width="13" height="13" viewBox="0 0 13 13" style="position:absolute;left:0;top:0"><path d="M1.5 5.0 L4.3 8.6 L9.1 1.5" fill="none" stroke="#3f52b4" stroke-width="1.6" stroke-linecap="butt" stroke-linejoin="miter"/></svg></div>
<div class="t" style="left:656.8px;top:327.17px;font-size:13.5px;line-height:15.5px;color:#000;">Délai</div>
<div class="nud" style="left:656px;top:341px;width:39px;height:21px;"><div class="nv" style="width:24px;height:19px;line-height:19.4px;">0</div><div class="sp" style="width:13px;height:19px;"><i class="u"></i><i class="d"></i></div></div>
<div class="t" style="left:698.3px;top:344.77px;font-size:13.5px;line-height:15.5px;color:#000;">ms</div>
<div class="nud" style="left:501px;top:381px;width:53px;height:20px;"><div class="nv" style="width:38px;height:18px;line-height:18.4px;">1400</div><div class="sp" style="width:13px;height:18px;"><i class="u"></i><i class="d"></i></div></div>
<div class="nud" style="left:555px;top:381px;width:53px;height:20px;"><div class="nv" style="width:38px;height:18px;line-height:18.4px;">0,500</div><div class="sp" style="width:13px;height:18px;"><i class="u"></i><i class="d"></i></div></div>
<div class="cb" style="left:653px;top:380px;width:68px;height:21px;"><span style="left:3px;width:46px;height:19px;line-height:21.4px;font-size:12px;">High Pass</span><b></b></div>
<div class="ck" style="left:724px;top:384px;width:13px;height:13px;"></div>
<div class="nud" style="left:501px;top:404px;width:53px;height:21px;"><div class="nv" style="width:38px;height:19px;line-height:19.4px;">1400</div><div class="sp" style="width:13px;height:19px;"><i class="u"></i><i class="d"></i></div></div>
<div class="nud" style="left:556px;top:404px;width:53px;height:21px;"><div class="nv" style="width:38px;height:19px;line-height:19.4px;">1,250</div><div class="sp" style="width:13px;height:19px;"><i class="u"></i><i class="d"></i></div></div>
<div class="nud" style="left:610px;top:404px;width:41px;height:21px;"><div class="nv" style="width:26px;height:19px;line-height:19.4px;">-3,6</div><div class="sp" style="width:13px;height:19px;"><i class="u"></i><i class="d"></i></div></div>
<div class="cb" style="left:653px;top:403px;width:68px;height:21px;"><span style="left:3px;width:46px;height:19px;line-height:21.4px;font-size:12px;">High-Shelf</span><b></b></div>
<div class="ck" style="left:724px;top:407px;width:13px;height:13px;"></div>
<div class="t" style="left:500px;top:366px;width:54px;height:17.5px;background:#c9d789;"></div>
<div class="t" style="left:609.8px;top:366px;width:42px;height:17.5px;background:#c9d789;"></div>
<div class="t" style="left:502.3px;top:368.77px;font-size:13.5px;line-height:15.5px;color:#000;">Frequence</div>
<div class="t" style="left:574px;top:368.77px;font-size:13.5px;line-height:15.5px;color:#000;">Q</div>
<div class="t" style="left:610.8px;top:368.77px;font-size:13.5px;line-height:15.5px;color:#000;">Boost</div>
<div class="t" style="left:666.6px;top:368.77px;width:34px;height:11.23px;overflow:hidden;font-size:13.5px;line-height:15.5px;"><span style="position:absolute;left:1px;top:0">Type</span></div>
<div style="left:18px;top:478px;width:81px;height:24px;background:#2d2e23;border:1px solid #cdbf83;border-top-color:#5a563c;color:#f1e3a6;text-align:center;font-size:13.5px;line-height:22.04px;white-space:nowrap;">Canal L</div>
<div style="left:105px;top:478px;width:80px;height:24px;background:#000;"></div>
<div style="left:105px;top:478px;width:79px;height:23px;background:#c9d789;color:#000;text-align:center;font-size:13.5px;line-height:23.44px;white-space:nowrap;">Canal R</div>
<div class="btn" style="left:314px;top:482px;width:82px;height:21px;line-height:20.24px;font-size:13.8px;">Copy L-&gt;R</div>
<div class="btn" style="left:409px;top:482px;width:82px;height:21px;line-height:20.24px;font-size:13.8px;">Copy R-&gt;L</div>
<div class="btn" style="left:609px;top:482px;width:122px;height:21px;line-height:20.10px;font-size:14px;">Transfert To DSP</div>
<div style="left:147px;top:520px;width:132px;height:14px;background:#8a8a80;"></div>
<div class="t" style="left:151.5px;top:520.26px;font-size:13.4px;line-height:15.4px;color:#ddd9a8;">Firmware V 4&nbsp; R 21</div>
<div style="left:84px;top:542px;width:195px;height:14px;background:#8a8a80;"></div>
<div class="t" style="left:87.5px;top:543.26px;font-size:13.4px;line-height:15.4px;color:#ddd9a8;">DSPIY connecté</div>
<div class="t" style="left:411px;top:543.56px;font-size:13.4px;line-height:15.4px;color:#ece6b8;">IR : 1 - 18</div>
<div class="t" style="left:514.3px;top:529.87px;font-size:13.5px;line-height:15.5px;color:#ece6b8;">Input Level</div>
<div style="left:501px;top:549px;width:112px;height:8px;background:linear-gradient(#e6e6e6,#cacaca);border:1px solid #ececec;border-radius:2px;"></div>
<div style="left:607.5px;top:527.5px;width:1px;height:1px;background:#8a8a7a;"></div>
<div style="left:647px;top:517px;width:72.5px;height:38.5px;background:#ff0000;border:1px solid #f3dede;text-align:center;text-indent:-2px;font-size:13.5px;line-height:38.64px;color:#2a0505;">MUTE</div>
</body></html>
